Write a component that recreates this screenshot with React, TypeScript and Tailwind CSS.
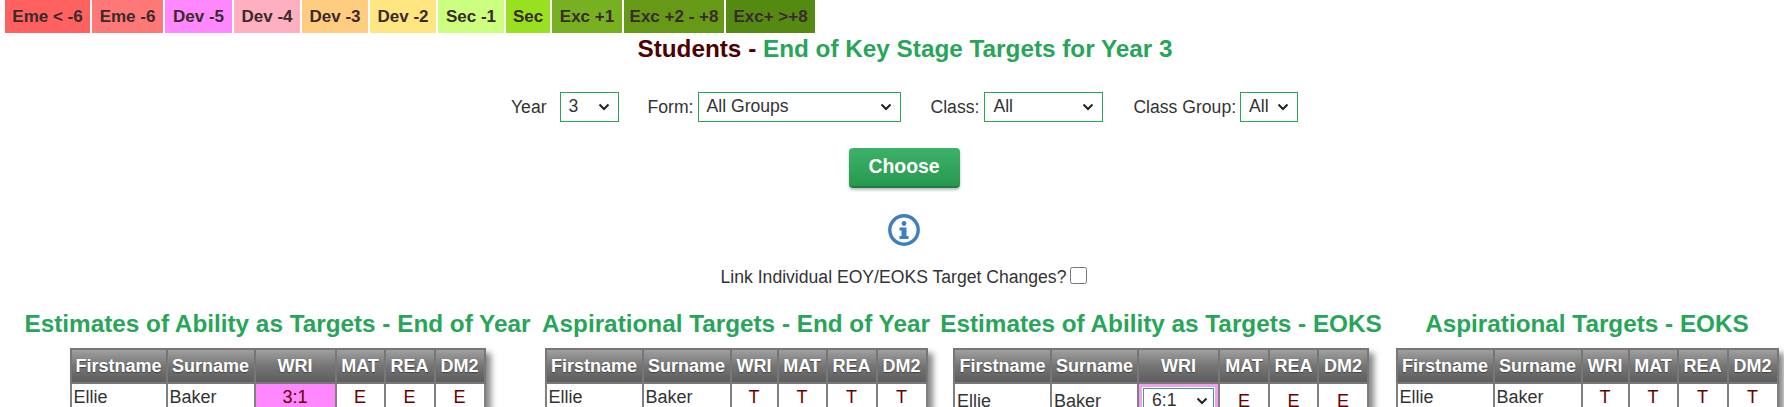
const legend = [
  { label: "Eme < -6", w: "w-[85px]", bg: "bg-[#ff6060]" },
  { label: "Eme -6", w: "w-[71px]", bg: "bg-[#ff7878]" },
  { label: "Dev -5", w: "w-[67px]", bg: "bg-[#ff88ff]" },
  { label: "Dev -4", w: "w-[66px]", bg: "bg-[#ffb0c0]" },
  { label: "Dev -3", w: "w-[66px]", bg: "bg-[#ffcc80]" },
  { label: "Dev -2", w: "w-[66px]", bg: "bg-[#ffe680]" },
  { label: "Sec -1", w: "w-[66px]", bg: "bg-[#ccff80]" },
  { label: "Sec", w: "w-[44px]", bg: "bg-[#99e020]" },
  { label: "Exc +1", w: "w-[70px]", bg: "bg-[#77b020]" },
  { label: "Exc +2 - +8", w: "w-[100px]", bg: "bg-[#669915]" },
  { label: "Exc+ >+8", w: "w-[89px]", bg: "bg-[#558a12]" },
];

const headCell =
  "h-[34px] border-2 border-[#777] bg-gradient-to-b from-[#a0a0a0] via-[#757575] to-[#5e5e5e] p-0 text-center text-[18px] font-bold text-white [text-shadow:0_1px_1px_#444]";
const bodyCell = "border-2 border-[#808080] bg-white px-[2px] text-[18px] leading-none text-[#333]";
const targetCell = "border-2 border-[#808080] bg-white text-center text-[18px] leading-none text-[#660000]";

function Chevron() {
  return (
    <svg width="12" height="8" viewBox="0 0 12 8" className="shrink-0">
      <path d="M1.5 1.5 L6 6 L10.5 1.5" fill="none" stroke="#222" strokeWidth="2" />
    </svg>
  );
}

function FakeSelect({ value, className }: { value: string; className: string }) {
  return (
    <div className={`flex h-[30px] items-center justify-between border border-[#27a558] bg-white text-[17.6px] leading-none text-[#333] ${className}`}>
      <span>{value}</span>
      <Chevron />
    </div>
  );
}

function TargetTable({
  widths,
  letter,
  wri,
}: {
  widths: string[];
  letter: string;
  wri?: "value" | "select";
}) {
  return (
    <table className="table-fixed border-collapse shadow-[5px_5px_6px_#888]">
      <colgroup>
        {widths.map((w, i) => (
          <col key={i} className={w} />
        ))}
      </colgroup>
      <thead>
        <tr>
          {["Firstname", "Surname", "WRI", "MAT", "REA", "DM2"].map((h) => (
            <th key={h} className={headCell}>
              {h}
            </th>
          ))}
        </tr>
      </thead>
      <tbody>
        <tr className={wri === "select" ? "h-[34px]" : "h-[28px]"}>
          <td className={bodyCell}>Ellie</td>
          <td className={bodyCell}>Baker</td>
          {wri === "value" && <td className={`${targetCell} !bg-[#ff88ff]`}>3:1</td>}
          {wri === "select" && (
            <td className="border-2 border-[#808080] bg-white p-0">
              <div className="border-[3px] border-[#f0a0f0] p-px">
                <FakeSelect value="6:1" className="!h-[26px] !border-[#4a9a80] pr-[5px] pl-2" />
              </div>
            </td>
          )}
          {!wri && <td className={targetCell}>{letter}</td>}
          <td className={targetCell}>{letter}</td>
          <td className={targetCell}>{letter}</td>
          <td className={targetCell}>{letter}</td>
        </tr>
      </tbody>
    </table>
  );
}

export default function App() {
  return (
    <div className="h-[407px] overflow-hidden bg-white font-['Liberation_Sans',Arial,sans-serif] text-[#333]">
      <div className="flex gap-[2px] pl-[5px]">
        {legend.map((item) => (
          <div
            key={item.label}
            className={`flex h-[33px] items-center justify-center text-[17px] font-bold whitespace-nowrap text-[#3a2a2a] ${item.w} ${item.bg}`}
          >
            {item.label}
          </div>
        ))}
      </div>
      <h1 className="mt-[4px] pl-[26px] text-center text-[24.3px] leading-[24px] font-bold text-[#27a558]">
        <span className="text-[#4d0000]">Students - </span>End of Key Stage Targets for Year 3
      </h1>
      <div className="mt-[31px] flex h-[30px] items-center pl-[511px] text-[17.6px]">
        <span>Year</span>
        <FakeSelect value="3" className="ml-[13px] w-[59px] px-2" />
        <span className="ml-[29px]">Form:</span>
        <FakeSelect value="All Groups" className="ml-[4px] w-[203px] px-2" />
        <span className="ml-[30px]">Class:</span>
        <FakeSelect value="All" className="ml-[5px] w-[119px] px-2" />
        <span className="ml-[30px]">Class Group:</span>
        <FakeSelect value="All" className="ml-[4px] w-[58px] px-2" />
      </div>
      <div className="mt-[26px] flex justify-center pl-[24px]">
        <button className="h-[40px] w-[111px] rounded-[4px] border-b-2 border-[#1e7d43] bg-gradient-to-b from-[#3cb268] to-[#27994f] text-[19.4px] font-bold text-white shadow-[0_2px_3px_#bbb]">
          Choose
        </button>
      </div>
      <div className="mt-[26px] flex justify-center pl-[24px]">
        <svg width="32" height="32" viewBox="0 0 32 32">
          <circle cx="16" cy="16" r="14.2" fill="none" stroke="#3f7fbf" strokeWidth="3.4" />
          <circle cx="16" cy="9.5" r="2.4" fill="#3f7fbf" />
          <path d="M11.5 13.5 H18.5 V22 H20.5 V25 H11.5 V22 H13.5 V16.5 H11.5 Z" fill="#3f7fbf" />
        </svg>
      </div>
      <div className="mt-[21px] flex h-[20px] items-center justify-center pl-[24px] text-[17.6px]">
        <span>Link Individual EOY/EOKS Target Changes?</span>
        <input type="checkbox" className="mb-[3px] ml-[4px] h-[17px] w-[17px]" />
      </div>
      <div className="mt-[21px] flex pl-[21px]">
        <section className="flex w-[513px] flex-col items-center">
          <h2 className="text-[24.3px] leading-[32px] font-bold whitespace-nowrap text-[#27a558]">Estimates of Ability as Targets - End of Year</h2>
          <div className="mt-[8px]">
            <TargetTable widths={["w-[96px]", "w-[88px]", "w-[81px]", "w-[49px]", "w-[50px]", "w-[50px]"]} letter="E" wri="value" />
          </div>
        </section>
        <section className="flex w-[404px] flex-col items-center">
          <h2 className="text-[24.3px] leading-[32px] font-bold whitespace-nowrap text-[#27a558]">Aspirational Targets - End of Year</h2>
          <div className="mt-[8px]">
            <TargetTable widths={["w-[97px]", "w-[88px]", "w-[47px]", "w-[49px]", "w-[50px]", "w-[50px]"]} letter="T" />
          </div>
        </section>
        <section className="flex w-[446px] flex-col items-center">
          <h2 className="text-[24.3px] leading-[32px] font-bold whitespace-nowrap text-[#27a558]">Estimates of Ability as Targets - EOKS</h2>
          <div className="mt-[8px]">
            <TargetTable widths={["w-[97px]", "w-[87px]", "w-[81px]", "w-[50px]", "w-[49px]", "w-[50px]"]} letter="E" wri="select" />
          </div>
        </section>
        <section className="flex w-[400px] flex-col items-center pl-[6px]">
          <h2 className="text-[24.3px] leading-[32px] font-bold whitespace-nowrap text-[#27a558]">Aspirational Targets - EOKS</h2>
          <div className="mt-[8px]">
            <TargetTable widths={["w-[97px]", "w-[88px]", "w-[47px]", "w-[49px]", "w-[50px]", "w-[50px]"]} letter="T" />
          </div>
        </section>
      </div>
    </div>
  );
}
